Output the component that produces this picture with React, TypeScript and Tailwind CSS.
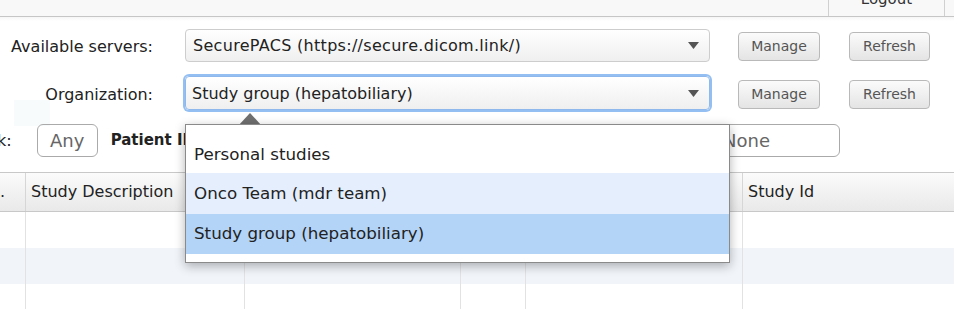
import { FC } from "react";

const font = "font-['Tahoma','DejaVu_Sans',sans-serif]";

const Button: FC<{ label: string; className?: string }> = ({ label, className }) => (
  <button
    className={`h-[29px] rounded-[4px] border border-[#b9b9b9] bg-gradient-to-b from-[#fbfbfb] to-[#e4e4e4] text-[14px] text-[#555] ${className ?? ""}`}
  >
    {label}
  </button>
);

const Caret = () => (
  <svg width="11" height="7" viewBox="0 0 11 7" className="shrink-0">
    <path d="M0 0h11L5.5 7z" fill="#555" />
  </svg>
);

const App = () => {
  return (
    <div className={`relative w-[954px] h-[309px] overflow-hidden bg-white text-[#222] ${font}`}>
      {/* faint watermark behind form */}
      <div className="absolute left-[14px] top-[100px] w-[36px] h-[26px] bg-[#f8fbfb]" />

      {/* top bar */}
      <div className="relative h-[17px] bg-[#f8f8f8] border-b border-[#c6c6c6] flex justify-end pr-[9px]">
        <div className="w-[117px] h-full border-l border-r border-[#d0d0d0] overflow-hidden">
          <div className="-mt-[11px] text-center text-[15px] leading-[20px] text-[#333]">Logout</div>
        </div>
      </div>
      <div className="h-[4px] bg-gradient-to-b from-[#f6f6f6] to-white" />

      {/* server row */}
      <div className="relative flex items-center mt-[8px] h-[33px]">
        <div className="w-[153px] text-right text-[16px] pt-[2px]">Available servers:</div>
        <div className="ml-[32px] w-[525px] h-[33px] rounded-[4px] border border-[#cdcdcd] bg-gradient-to-b from-white to-[#efefef] flex items-center pl-[7px] pr-[10px]">
          <span className="flex-1 text-[16px] tracking-[0.3px] pt-[1px]">SecurePACS (https://secure.dicom.link/)</span>
          <Caret />
        </div>
        <Button label="Manage" className="ml-[28px] w-[82px] mt-[1px]" />
        <Button label="Refresh" className="ml-[29px] w-[81px] mt-[1px]" />
      </div>

      {/* organization row */}
      <div className="relative flex items-center mt-[14px] h-[34px]">
        <div className="w-[153px] text-right text-[16px] pt-[3px]">Organization:</div>
        <div className="ml-[32px] w-[525px] h-[34px] rounded-[4px] border border-[#8fb9ec] ring-2 ring-[#93bff2] bg-gradient-to-b from-white to-[#efefef] flex items-center pl-[6px] pr-[10px]">
          <span className="flex-1 text-[16px] pt-[1px]">Study group (hepatobiliary)</span>
          <Caret />
        </div>
        <Button label="Manage" className="ml-[28px] w-[82px] mt-[2px]" />
        <Button label="Refresh" className="ml-[29px] w-[81px] mt-[2px]" />
      </div>

      {/* filter row */}
      <div className="relative flex items-center mt-[14px] h-[33px]">
        <span className="-ml-[3px] text-[16px]">k:</span>
        <div className="ml-[25px] w-[61px] h-[33px] rounded-[6px] border border-[#aaa] flex items-center justify-center text-[18px] text-[#666]">
          Any
        </div>
        <span className="ml-[13px] text-[15px] font-bold">Patient ID</span>
        <div className="ml-auto mr-[114px] w-[135px] h-[33px] rounded-[6px] border border-[#aaa] flex items-center pl-[17px] text-[18px] text-[#666]">
          None
        </div>
      </div>

      {/* table */}
      <div className="mt-[15px]">
        <div className="flex h-[40px] border-y border-[#c8c8c8] bg-gradient-to-b from-[#fbfbfb] to-[#e9e9e9] text-[16px]">
          <div className="w-[26px] border-r border-[#d6d6d6] flex items-center">.</div>
          <div className="w-[219px] border-r border-[#d6d6d6] flex items-center pl-[5px]">Study Description</div>
          <div className="w-[216px] border-r border-[#d6d6d6]" />
          <div className="w-[65px] border-r border-[#d6d6d6]" />
          <div className="w-[217px] border-r border-[#d6d6d6]" />
          <div className="flex-1 flex items-center pl-[5px]">Study Id</div>
        </div>
        {["bg-white", "bg-[#f1f5fa]", "bg-white"].map((bg, i) => (
          <div key={i} className={`flex h-[36px] ${bg}`}>
            <div className="w-[26px] border-r border-[#e2e2e2]" />
            <div className="w-[219px] border-r border-[#e2e2e2]" />
            <div className="w-[216px] border-r border-[#e2e2e2]" />
            <div className="w-[65px] border-r border-[#e2e2e2]" />
            <div className="w-[217px] border-r border-[#e2e2e2]" />
            <div className="flex-1" />
          </div>
        ))}
      </div>

      {/* organization dropdown */}
      <svg width="24" height="13" viewBox="0 0 24 13" className="absolute left-[238px] top-[113px]">
        <path d="M12 0L24 13H0z" fill="#6f6f6f" />
      </svg>
      <div className="absolute left-[185px] top-[124px] w-[545px] h-[139px] bg-white border border-[#8a8a8a] shadow-[0_3px_10px_rgba(0,0,0,0.3)] pt-[11px] text-[16.7px]">
        <div className="h-[37px] flex items-center pl-[8px]">Personal studies</div>
        <div className="h-[41px] flex items-center pl-[8px] bg-[#e4eefd]">Onco Team (mdr team)</div>
        <div className="h-[40px] flex items-center pl-[8px] bg-[#b3d4f7]">Study group (hepatobiliary)</div>
      </div>
    </div>
  );
};

export default App;
